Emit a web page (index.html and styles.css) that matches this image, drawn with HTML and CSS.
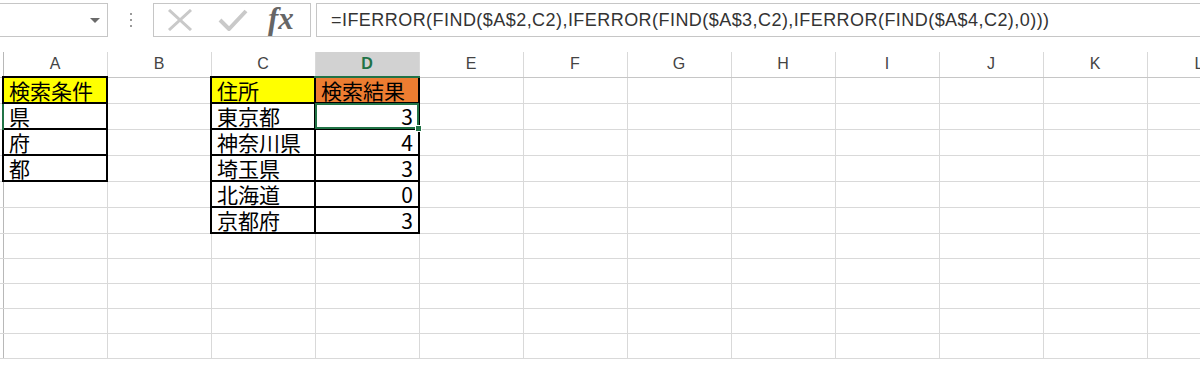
FILE: index.html
```html
<!DOCTYPE html>
<html lang="ja">
  <head>
    <meta charset="UTF-8" />
    <title>検索結果</title>
    <link rel="stylesheet" href="styles.css">
  </head>
  <body>
    <!-- formula bar -->
    <div class="bar">
      <div class="namebox"><span class="arrow"></span></div>
      <div class="grip"><i></i><i></i><i></i></div>
      <div class="buttons">
        <svg class="icon" width="26" height="22" viewBox="0 0 26 22">
          <path d="M2 1 L24 21 M24 1 L2 21" stroke="#c9c9c9" stroke-width="3" fill="none" />
        </svg>
        <svg class="icon" width="30" height="22" viewBox="0 0 30 22">
          <path d="M2 11 L11 20 L28 2" stroke="#c9c9c9" stroke-width="4" fill="none" />
        </svg>
        <span class="fx">fx</span>
      </div>
      <div class="formula">=IFERROR(FIND($A$2,C2),IFERROR(FIND($A$3,C2),IFERROR(FIND($A$4,C2),0)))</div>
    </div>

    <!-- sheet -->
    <table class="sheet">
      <colgroup>
        <col class="stub-col" />
        <col class="cell-col" span="12" />
      </colgroup>
      <tr class="heads">
        <th class="stub"></th>
        <th>A</th><th>B</th><th>C</th><th class="sel">D</th><th>E</th><th>F</th>
        <th>G</th><th>H</th><th>I</th><th>J</th><th>K</th><th>L</th>
      </tr>
      <tr>
        <td class="stub"></td>
        <td class="box yellow">検索条件</td><td></td>
        <td class="box yellow">住所</td><td class="box orange">検索結果</td>
        <td></td><td></td><td></td><td></td><td></td><td></td><td></td><td></td>
      </tr>
      <tr>
        <td class="stub current"></td>
        <td class="box">県</td><td></td>
        <td class="box">東京都</td><td class="box num active">3</td>
        <td></td><td></td><td></td><td></td><td></td><td></td><td></td><td></td>
      </tr>
      <tr>
        <td class="stub"></td>
        <td class="box">府</td><td></td>
        <td class="box">神奈川県</td><td class="box num">4</td>
        <td></td><td></td><td></td><td></td><td></td><td></td><td></td><td></td>
      </tr>
      <tr>
        <td class="stub"></td>
        <td class="box">都</td><td></td>
        <td class="box">埼玉県</td><td class="box num">3</td>
        <td></td><td></td><td></td><td></td><td></td><td></td><td></td><td></td>
      </tr>
      <tr>
        <td class="stub"></td>
        <td></td><td></td>
        <td class="box">北海道</td><td class="box num">0</td>
        <td></td><td></td><td></td><td></td><td></td><td></td><td></td><td></td>
      </tr>
      <tr>
        <td class="stub"></td>
        <td></td><td></td>
        <td class="box">京都府</td><td class="box num">3</td>
        <td></td><td></td><td></td><td></td><td></td><td></td><td></td><td></td>
      </tr>
      <tr>
        <td class="stub"></td><td></td><td></td><td></td><td></td><td></td><td></td>
        <td></td><td></td><td></td><td></td><td></td><td></td>
      </tr>
      <tr>
        <td class="stub"></td><td></td><td></td><td></td><td></td><td></td><td></td>
        <td></td><td></td><td></td><td></td><td></td><td></td>
      </tr>
      <tr>
        <td class="stub"></td><td></td><td></td><td></td><td></td><td></td><td></td>
        <td></td><td></td><td></td><td></td><td></td><td></td>
      </tr>
      <tr>
        <td class="stub"></td><td></td><td></td><td></td><td></td><td></td><td></td>
        <td></td><td></td><td></td><td></td><td></td><td></td>
      </tr>
      <tr>
        <td class="stub"></td><td></td><td></td><td></td><td></td><td></td><td></td>
        <td></td><td></td><td></td><td></td><td></td><td></td>
      </tr>
    </table>
  </body>
</html>
```

FILE: styles.css
```css
/* General */
body {
  margin: 0;
  background: #fff;
  overflow: hidden;
  font-family: "Liberation Sans", sans-serif;
  color: #000;
}

/* Formula bar */
.bar {
  display: flex;
  height: 34px;
  padding-top: 3px;
}

.namebox {
  position: relative;
  width: 109px;
  margin-left: -1px;
  border: 1px solid #c6c6c6;
  box-sizing: border-box;
}

.arrow {
  position: absolute;
  left: 90px;
  top: 14px;
  border-left: 5px solid transparent;
  border-right: 5px solid transparent;
  border-top: 5px solid #6a6a6a;
}

.grip {
  width: 45px;
  display: flex;
  flex-direction: column;
  align-items: center;
  justify-content: center;
  gap: 4px;
}

.grip i {
  width: 2px;
  height: 2px;
  background: #9a9a9a;
}

.buttons {
  width: 158px;
  border: 1px solid #c6c6c6;
  box-sizing: border-box;
  display: flex;
  align-items: center;
  padding-left: 13px;
}

.icon {
  display: block;
}

.buttons .icon + .icon {
  margin-left: 25px;
}

.fx {
  margin-left: 20px;
  font-family: "Liberation Serif", serif;
  font-style: italic;
  font-weight: bold;
  font-size: 31px;
  color: #666;
  line-height: 30px;
  margin-top: -3px;
}

.formula {
  flex: 1;
  margin-left: 5px;
  margin-right: -2px;
  border: 1px solid #c6c6c6;
  box-sizing: border-box;
  padding-left: 14px;
  font-size: 18px;
  line-height: 32px;
  color: #333;
  white-space: nowrap;
  letter-spacing: 0.45px;
}

/* Sheet */
.sheet {
  margin-top: 15px;
  border-collapse: collapse;
  table-layout: fixed;
  width: 1251px;
}

.stub-col {
  width: 3px;
}

.cell-col {
  width: 104px;
}

.sheet th,
.sheet td {
  padding: 0 5px;
  border: 1px solid #d9d9d9;
  white-space: nowrap;
  overflow: visible;
}

.sheet th.stub,
.sheet td.stub {
  padding: 0;
  border-left: none;
  border-right: 1px solid #b8b8b8;
}

.sheet td.current {
  border-right: 2px solid #217346;
}

.heads th {
  height: 24px;
  border-top: none;
  border-bottom-color: #c6c6c6;
  font-weight: normal;
  font-size: 16px;
  color: #444;
  text-align: center;
}

.heads th.sel {
  background: #d2d2d2;
  border-bottom: 2px solid #217346;
  color: #217346;
  font-weight: bold;
}

.sheet td {
  height: 24px;
  font-family: "Noto Sans CJK JP", sans-serif;
  font-size: 21px;
  line-height: 24px;
  vertical-align: bottom;
}

.sheet td.box {
  border: 2px solid #000;
}

.yellow {
  background: #ffff00;
}

.orange {
  background: #ed7d31;
}

.num {
  text-align: right;
}

.sheet td.active {
  position: relative;
  outline: 2px solid #217346;
  outline-offset: -2px;
}

.sheet td.active::after {
  content: "";
  position: absolute;
  right: -4px;
  bottom: -4px;
  width: 5px;
  height: 5px;
  background: #217346;
  border: 1px solid #fff;
}
```
